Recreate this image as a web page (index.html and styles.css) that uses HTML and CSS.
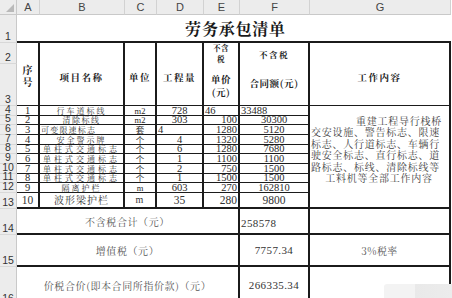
FILE: index.html
```html
<!DOCTYPE html>
<html lang="zh-CN">
<head>
<meta charset="utf-8">
<title>劳务承包清单</title>
<link rel="stylesheet" href="styles.css">
</head>
<body>
<div class="sheet">
  <div class="corner"><svg width="8" height="8" viewBox="0 0 8 8"><path d="M8 0V8H0Z" fill="#b9b9b9"/></svg></div>
  <div class="ch">A</div>
  <div class="ch">B</div>
  <div class="ch">C</div>
  <div class="ch">D</div>
  <div class="ch">E</div>
  <div class="ch">F</div>
  <div class="ch">G</div>

  <div class="rh">1</div>
  <div class="title">劳务承包清单</div>

  <div class="rh">2</div>
  <div class="c hd hd-a"><span>序</span><span>号</span></div>
  <div class="c hd">项目名称</div>
  <div class="c hd">单位</div>
  <div class="c hd">工程量</div>
  <div class="c hd hd-e"><span class="sm">不含</span><span class="sm">税</span><span class="gap">单价</span><span>(元)</span></div>
  <div class="c hd hd-f"><span class="sm">不含税</span><span>合同额(元)</span></div>
  <div class="c hd">工作内容</div>
  <div class="rh">3</div>

  <div class="rh">4</div>
  <div class="c d num">1</div>
  <div class="c d name ls15">行车道标线</div>
  <div class="c d unit">m2</div>
  <div class="c d num">728</div>
  <div class="c d num left">46</div>
  <div class="c d num left">33488</div>
  <div class="c work">
    <p class="first">重建工程导行栈桥</p>
    <p>交安设施、警告标志、限速</p>
    <p>标志、人行道标志、车辆行</p>
    <p>驶安全标志、直行标志、道</p>
    <p>路标志、标线、清除标线等</p>
    <p class="last">工料机等全部工作内容</p>
  </div>

  <div class="rh">5</div>
  <div class="c d num">2</div>
  <div class="c d name ls1">清除标线</div>
  <div class="c d unit">m2</div>
  <div class="c d num">303</div>
  <div class="c d num right">100</div>
  <div class="c d num">30300</div>

  <div class="rh">6</div>
  <div class="c d num">3</div>
  <div class="c d name left ls08">可变限速标志</div>
  <div class="c d unit">套</div>
  <div class="c d num left">4</div>
  <div class="c d num right">1280</div>
  <div class="c d num">5120</div>

  <div class="rh">7</div>
  <div class="c d num">4</div>
  <div class="c d name ls15">安全警示牌</div>
  <div class="c d unit">个</div>
  <div class="c d num">4</div>
  <div class="c d num right">1320</div>
  <div class="c d num">5280</div>

  <div class="rh">8</div>
  <div class="c d num">5</div>
  <div class="c d name ls25">单柱式交通标志</div>
  <div class="c d unit">个</div>
  <div class="c d num">6</div>
  <div class="c d num right">1280</div>
  <div class="c d num">7680</div>

  <div class="rh">9</div>
  <div class="c d num">6</div>
  <div class="c d name ls25">单柱式交通标志</div>
  <div class="c d unit">个</div>
  <div class="c d num">1</div>
  <div class="c d num right">1100</div>
  <div class="c d num">1100</div>

  <div class="rh">10</div>
  <div class="c d num">7</div>
  <div class="c d name ls25">单柱式交通标志</div>
  <div class="c d unit">个</div>
  <div class="c d num">2</div>
  <div class="c d num right">750</div>
  <div class="c d num">1500</div>

  <div class="rh">11</div>
  <div class="c d num">8</div>
  <div class="c d name ls25">单柱式交通标志</div>
  <div class="c d unit">个</div>
  <div class="c d num">1</div>
  <div class="c d num right">1500</div>
  <div class="c d num">1500</div>

  <div class="rh">12</div>
  <div class="c d num">9</div>
  <div class="c d name ls15">隔离护栏</div>
  <div class="c d unit">m</div>
  <div class="c d num">603</div>
  <div class="c d num right">270</div>
  <div class="c d num">162810</div>

  <div class="rh">13</div>
  <div class="c e num">10</div>
  <div class="c e name">波形梁护栏</div>
  <div class="c e unit">m</div>
  <div class="c e num">35</div>
  <div class="c e num right">280</div>
  <div class="c e num">9800</div>

  <div class="rh">14</div>
  <div class="c t label">不含税合计（元）</div>
  <div class="c t num left top">258578</div>
  <div class="c t"></div>

  <div class="rh">15</div>
  <div class="c t label">增值税（元）</div>
  <div class="c t num">7757.34</div>
  <div class="c t note">3%税率</div>

  <div class="rh">16</div>
  <div class="c t label">价税合价(即本合同所指价款)（元）</div>
  <div class="c t num">266335.34</div>
  <div class="c t"></div>
</div>
<div class="wm"></div>
</body>
</html>
```
FILE: styles.css
```css
* {
  box-sizing: border-box;
  margin: 0;
  padding: 0;
}

body {
  margin: 0;
  width: 452px;
  height: 298px;
  overflow: hidden;
  position: relative;
  background: #ffffff;
  color: #222222;
  font-family: "Noto Serif CJK SC", "Noto Sans CJK SC", serif;
}

.sheet {
  display: grid;
  grid-template-columns: 17px 23px 85px 32px 47px 36px 70px 141px;
  grid-template-rows: 15px 28px 21px 42px 10px 9px 10px 10px 9px 10px 10px 9px 10px 16px 26px 32px 38px;
}

.corner {
  background: #ececec;
  border-right: 1px solid #c9c9c9;
  border-bottom: 1px solid #c9c9c9;
  display: flex;
  align-items: flex-end;
  justify-content: flex-end;
  padding: 0 2px 2px 0;
}

.ch {
  background: #ececec;
  border-right: 1px solid #d2d2d2;
  border-bottom: 1px solid #c9c9c9;
  font: 11px/14px "Liberation Sans", sans-serif;
  color: #444444;
  text-align: center;
}

.rh {
  background: #ececec;
  border-right: 1px solid #c9c9c9;
  border-bottom: 1px solid #d8d8d8;
  font: 10.5px/9px "Liberation Sans", sans-serif;
  color: #333333;
  display: flex;
  align-items: flex-end;
  justify-content: center;
  padding-bottom: 1px;
}

.title {
  grid-column: span 7;
  border-bottom: 2px solid #1b1b1b;
  display: flex;
  align-items: center;
  justify-content: center;
  font-size: 16px;
  font-weight: 700;
  letter-spacing: 0.8px;
  color: #1a1a1a;
  padding: 1px 0 0 3px;
}

.c {
  border-right: 2px solid #1b1b1b;
  border-bottom: 1px solid #1b1b1b;
  display: flex;
  align-items: center;
  justify-content: center;
  white-space: nowrap;
}

/* header cells */
.hd {
  grid-row: span 2;
  flex-direction: column;
  font-size: 9.5px;
  font-weight: 700;
  letter-spacing: 1.5px;
  color: #222222;
  padding-top: 5px;
}

.hd-a {
  line-height: 12px;
  letter-spacing: 0;
  font-size: 10px;
  padding-top: 4px;
}

.hd-e {
  justify-content: flex-start;
  letter-spacing: 0.5px;
  line-height: 11px;
  padding-top: 0;
}

.hd-e .sm {
  font-size: 7.5px;
  line-height: 10.5px;
}

.hd-e .gap {
  margin-top: 8px;
  line-height: 15px;
}

.hd-f {
  justify-content: flex-start;
  padding-top: 5px;
  letter-spacing: 0.6px;
}

.hd-f .sm {
  font-size: 8.5px;
  letter-spacing: 1.5px;
  margin-bottom: 16px;
}

/* data rows */
.d {
  align-items: flex-end;
  font-size: 8px;
  line-height: 9px;
  color: #2a2a2a;
}

.d.num {
  font-family: "Liberation Serif", serif;
  font-size: 10.5px;
  line-height: 8px;
}

.name {
  color: #333333;
}

.ls08 {
  letter-spacing: 1.2px;
}

.ls1 {
  letter-spacing: 1.5px;
}

.ls15 {
  letter-spacing: 2px;
}

.ls25 {
  letter-spacing: 3px;
}

.unit {
  font-family: "Liberation Serif", "Noto Sans CJK SC", serif;
}

.d.unit {
  font-size: 8.5px;
  line-height: 8px;
}

.left {
  justify-content: flex-start;
  padding-left: 1px;
}

.right {
  justify-content: flex-end;
  padding-right: 1px;
}

.e {
  border-bottom-width: 2px;
  font-size: 10px;
  letter-spacing: 1px;
  color: #333333;
  line-height: 12px;
}

.e.num {
  font-family: "Liberation Serif", serif;
  font-size: 11.5px;
  letter-spacing: 0;
}

.work {
  grid-row: span 10;
  border-bottom-width: 2px;
  flex-direction: column;
  align-items: stretch;
  justify-content: flex-start;
  padding: 9px 9px 0 1px;
  font-size: 10px;
  line-height: 11.4px;
  letter-spacing: 0.75px;
  color: #444444;
}

.work p {
  text-align: center;
}

.work .first {
  text-align: right;
  margin-right: -2px;
}

.work .last {
  padding-left: 7px;
}

/* totals */
.t {
  border-bottom-width: 2px;
  font-size: 10px;
  color: #555555;
}

.t.label {
  grid-column: span 5;
  letter-spacing: 0.6px;
  padding-top: 1px;
}

.t.num {
  font-family: "Liberation Serif", serif;
  font-size: 11px;
  letter-spacing: 0.4px;
  color: #333333;
}

.t.num.left {
  padding-left: 1px;
}

.top {
  align-items: flex-start;
  padding-top: 8px;
}

.note {
  letter-spacing: 0.4px;
  padding-top: 1px;
}

.wm {
  position: absolute;
  right: 0;
  bottom: 0;
  width: 68px;
  height: 14px;
  background: linear-gradient(90deg, #f3f3f3 0, #f3f3f3 45%, #e9e9e9 45%, #ececec 100%);
  border-radius: 3px 0 0 0;
}
```
